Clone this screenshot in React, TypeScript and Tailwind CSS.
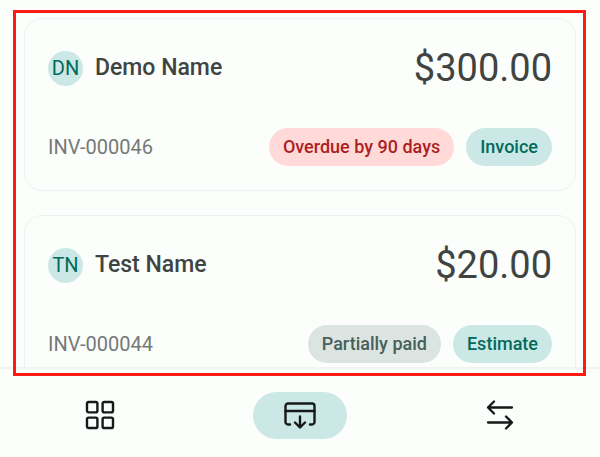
import React from "react";

const invoices = [
  {
    id: "INV-000046",
    initials: "DN",
    name: "Demo Name",
    amount: "$300.00",
    status: "Overdue by 90 days",
    statusClass: "bg-[#ffdad8] text-[#ac1f22]",
    type: "Invoice",
  },
  {
    id: "INV-000044",
    initials: "TN",
    name: "Test Name",
    amount: "$20.00",
    status: "Partially paid",
    statusClass: "bg-[#dbe4e1] text-[#48605a]",
    type: "Estimate",
  },
];

function InvoiceCard({ invoice }: { invoice: (typeof invoices)[number] }) {
  return (
    <article className="shrink-0 rounded-[18px] border border-[#eef1f1] px-[23px] pt-[25px] pb-6">
      <div className="flex h-12 items-center">
        <span className="flex size-[35px] items-center justify-center rounded-full bg-[#cce8e6] text-xl text-[#006a5b]">
          {invoice.initials}
        </span>
        <h2 className="ml-3 text-[23px] font-medium text-[#3f4443]">{invoice.name}</h2>
        <span className="ml-auto text-[38px] text-[#3f4443]">{invoice.amount}</span>
      </div>

      <div className="mt-9 flex items-center gap-3">
        <span className="mr-auto text-xl text-[#747978]">{invoice.id}</span>
        <span
          className={`flex h-[38px] items-center rounded-full px-[14px] text-lg font-medium ${invoice.statusClass}`}
        >
          {invoice.status}
        </span>
        <span className="flex h-[38px] items-center rounded-full bg-[#cce8e6] px-[14px] text-lg font-medium text-[#006a5b]">
          {invoice.type}
        </span>
      </div>
    </article>
  );
}

function GridIcon() {
  return (
    <svg width="30" height="30" viewBox="0 0 30 30" fill="none" stroke="currentColor" strokeWidth="2.4">
      <rect x="2" y="2" width="10.4" height="10.4" rx="1.6" />
      <rect x="17.6" y="2" width="10.4" height="10.4" rx="1.6" />
      <rect x="2" y="17.6" width="10.4" height="10.4" rx="1.6" />
      <rect x="17.6" y="17.6" width="10.4" height="10.4" rx="1.6" />
    </svg>
  );
}

function PaymentIcon() {
  return (
    <svg
      width="34"
      height="28"
      viewBox="0 0 34 28"
      fill="none"
      stroke="currentColor"
      strokeWidth="2.4"
      strokeLinecap="round"
      strokeLinejoin="round"
    >
      <path d="M7 23.5H5a2.500 2.500 0 0 1-2.500-2.500V5A2.500 2.500 0 0 1 5 2.500h24A2.500 2.500 0 0 1 31.500 5v16a2.500 2.500 0 0 1-2.500 2.500h-2" />
      <path d="M2.500 10h29M17 15.500V26M12 21.500l5 5 5-5" />
    </svg>
  );
}

function TransferIcon() {
  return (
    <svg
      width="28"
      height="30"
      viewBox="0 0 28 30"
      fill="none"
      stroke="currentColor"
      strokeWidth="2.3"
      strokeLinecap="round"
      strokeLinejoin="round"
    >
      <path d="M26 7.500H2M8 1.500l-6 6 6 6" />
      <path d="M2 22.500h24M20 16.500l6 6-6 6" />
    </svg>
  );
}

export default function App() {
  return (
    <div className="relative flex h-screen flex-col bg-[#fcfefb] font-['Roboto',sans-serif]">
      <main className="flex min-h-0 flex-1 flex-col gap-6 overflow-hidden px-6 pt-[18px]">
        {invoices.map((invoice) => (
          <InvoiceCard key={invoice.id} invoice={invoice} />
        ))}
      </main>

      <nav className="grid h-[90px] shrink-0 grid-cols-3 border-t-2 border-[#f0f3f2] text-[#151918]">
        <button aria-label="Dashboard" className="flex items-center justify-center pt-1">
          <GridIcon />
        </button>
        <button aria-label="Payments" className="flex items-center justify-center pt-1">
          <span className="flex h-[47px] w-[94px] items-center justify-center rounded-full bg-[#cce8e6]">
            <PaymentIcon />
          </span>
        </button>
        <button aria-label="Transfers" className="flex items-center justify-center pt-1">
          <TransferIcon />
        </button>
      </nav>

      {/* Highlight around the invoice list */}
      <div className="pointer-events-none absolute top-[10px] right-[14px] bottom-[81px] left-[13px] border-3 border-[#ff1a12]" />
    </div>
  );
}
